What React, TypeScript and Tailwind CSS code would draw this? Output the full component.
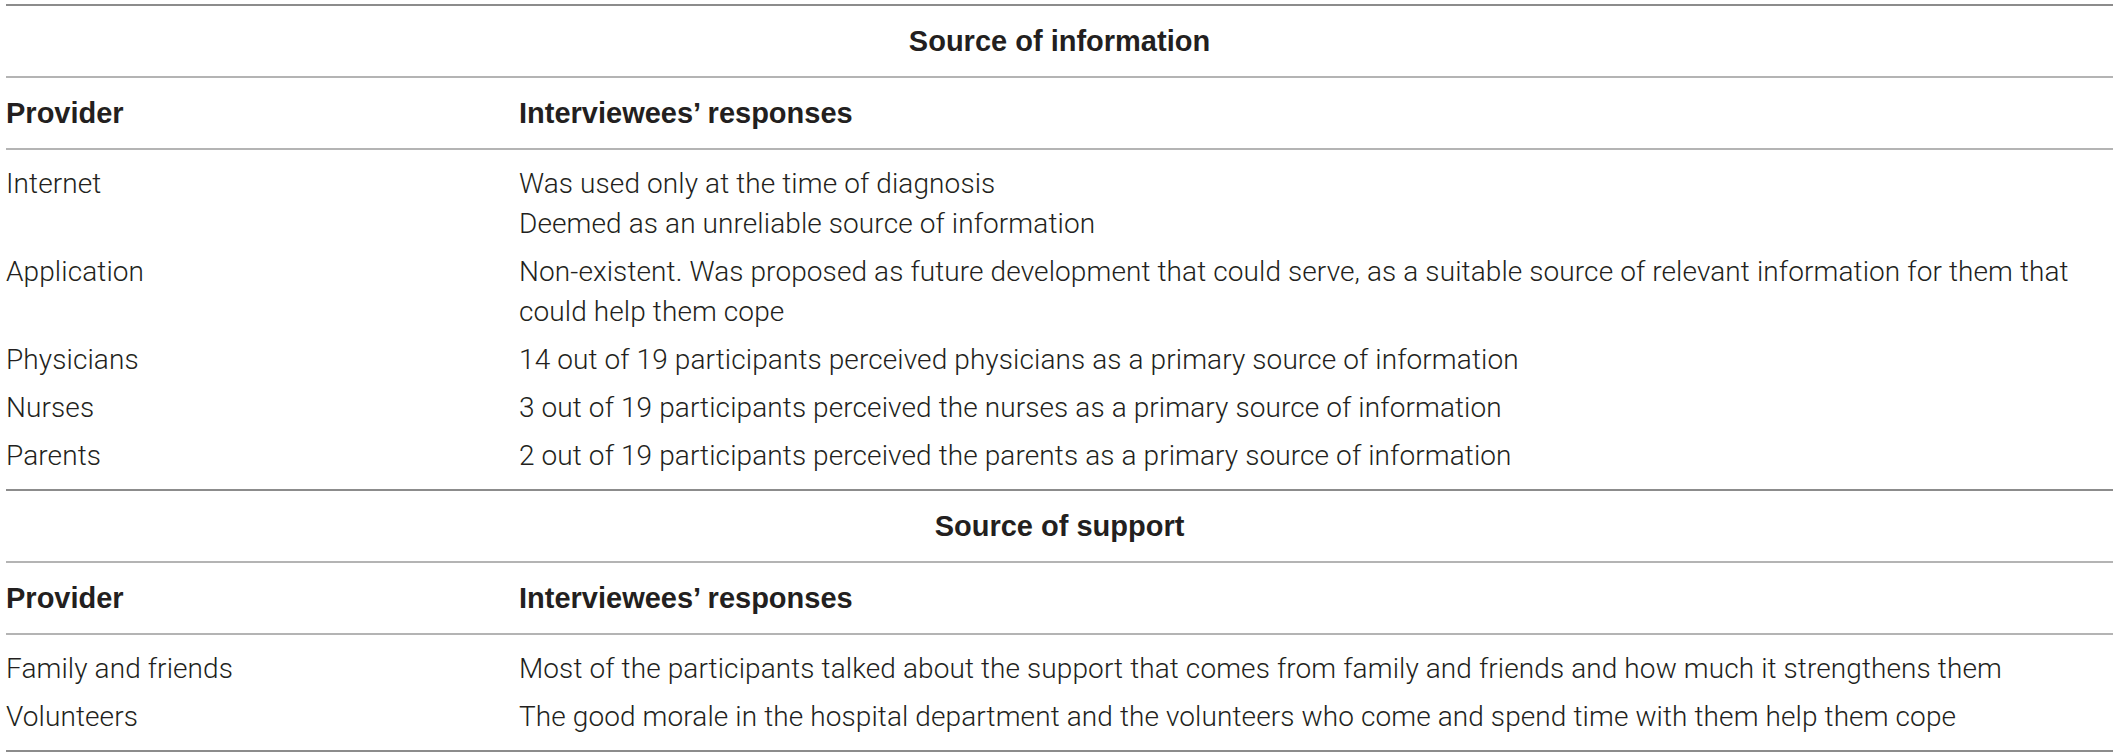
const INFO_ROWS = [
  {
    provider: "Internet",
    responses: ["Was used only at the time of diagnosis", "Deemed as an unreliable source of information"],
  },
  {
    provider: "Application",
    responses: [
      "Non-existent. Was proposed as future development that could serve, as a suitable source of relevant information for them that could help them cope",
    ],
  },
  { provider: "Physicians", responses: ["14 out of 19 participants perceived physicians as a primary source of information"] },
  { provider: "Nurses", responses: ["3 out of 19 participants perceived the nurses as a primary source of information"] },
  { provider: "Parents", responses: ["2 out of 19 participants perceived the parents as a primary source of information"] },
];

const SUPPORT_ROWS = [
  {
    provider: "Family and friends",
    responses: ["Most of the participants talked about the support that comes from family and friends and how much it strengthens them"],
  },
  {
    provider: "Volunteers",
    responses: ["The good morale in the hospital department and the volunteers who come and spend time with them help them cope"],
  },
];

type Row = { provider: string; responses: string[] };

const BOLD_FONT = { fontFamily: '"Liberation Sans", Arial, sans-serif' };

function Section({ title, rows, last }: { title: string; rows: Row[]; last?: boolean }) {
  return (
    <div className={last ? "border-b-2 border-[#8c8c8c]" : ""}>
      {/* section title */}
      <div
        className="h-[72px] border-t-2 border-[#8c8c8c] flex items-center justify-center font-bold text-[29px]"
        style={BOLD_FONT}
      >
        {title}
      </div>

      {/* column headings */}
      <div
        className="h-[72px] border-t-2 border-[#b4b4b4] grid grid-cols-[513px_1fr] items-center font-bold text-[29px]"
        style={BOLD_FONT}
      >
        <div>Provider</div>
        <div>Interviewees’ responses</div>
      </div>

      {/* body */}
      <div className="border-t-2 border-[#b4b4b4] pt-[10px] pb-[9px] font-light tracking-[0.1px]">
        {rows.map((row, i) => (
          <div key={i} className="grid grid-cols-[513px_1fr] py-[4px]">
            <div>{row.provider}</div>
            <div className="pr-[20px]">
              {row.responses.map((r, j) => (
                <div key={j}>{r}</div>
              ))}
            </div>
          </div>
        ))}
      </div>
    </div>
  );
}

export default function App() {
  return (
    <div
      className="w-[2118px] h-[754px] bg-white pt-[4px] pl-[6px] pr-[5px] text-[28px] leading-[40px] text-[#231f20]"
      style={{ fontFamily: 'Roboto, "Liberation Sans", Arial, sans-serif' }}
    >
      <Section title="Source of information" rows={INFO_ROWS} />
      <Section title="Source of support" rows={SUPPORT_ROWS} last />
    </div>
  );
}
